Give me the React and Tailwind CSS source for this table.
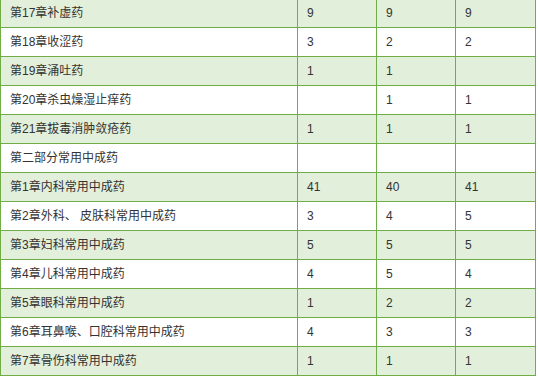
const rows = [
  ["第17章补虚药", "9", "9", "9"],
  ["第18章收涩药", "3", "2", "2"],
  ["第19章涌吐药", "1", "1", ""],
  ["第20章杀虫燥湿止痒药", "", "1", "1"],
  ["第21章拔毒消肿敛疮药", "1", "1", "1"],
  ["第二部分常用中成药", "", "", ""],
  ["第1章内科常用中成药", "41", "40", "41"],
  ["第2章外科、 皮肤科常用中成药", "3", "4", "5"],
  ["第3章妇科常用中成药", "5", "5", "5"],
  ["第4章儿科常用中成药", "4", "5", "4"],
  ["第5章眼科常用中成药", "1", "2", "2"],
  ["第6章耳鼻喉、口腔科常用中成药", "4", "3", "3"],
  ["第7章骨伤科常用中成药", "1", "1", "1"],
];

export default function App() {
  return (
    <div className="w-[538px] h-[379px] overflow-hidden bg-white">
      <div
        className="-mt-[2px] w-[536px] grid grid-cols-[297px_79px_79px_80px] border-l border-t border-[#70ad47] text-[12px] text-[#333]"
        style={{ fontFamily: '"Liberation Sans", "Noto Sans CJK SC", sans-serif' }}
      >
        {rows.map((r, i) =>
          r.map((c, j) => (
            <div
              key={i + "-" + j}
              className={`h-[29px] flex items-center pl-[9px] border-r border-b border-[#70ad47] whitespace-nowrap ${
                i % 2 === 0 ? "bg-[#e2efda]" : "bg-white"
              }`}
            >
              {c}
            </div>
          ))
        )}
      </div>
    </div>
  );
}
